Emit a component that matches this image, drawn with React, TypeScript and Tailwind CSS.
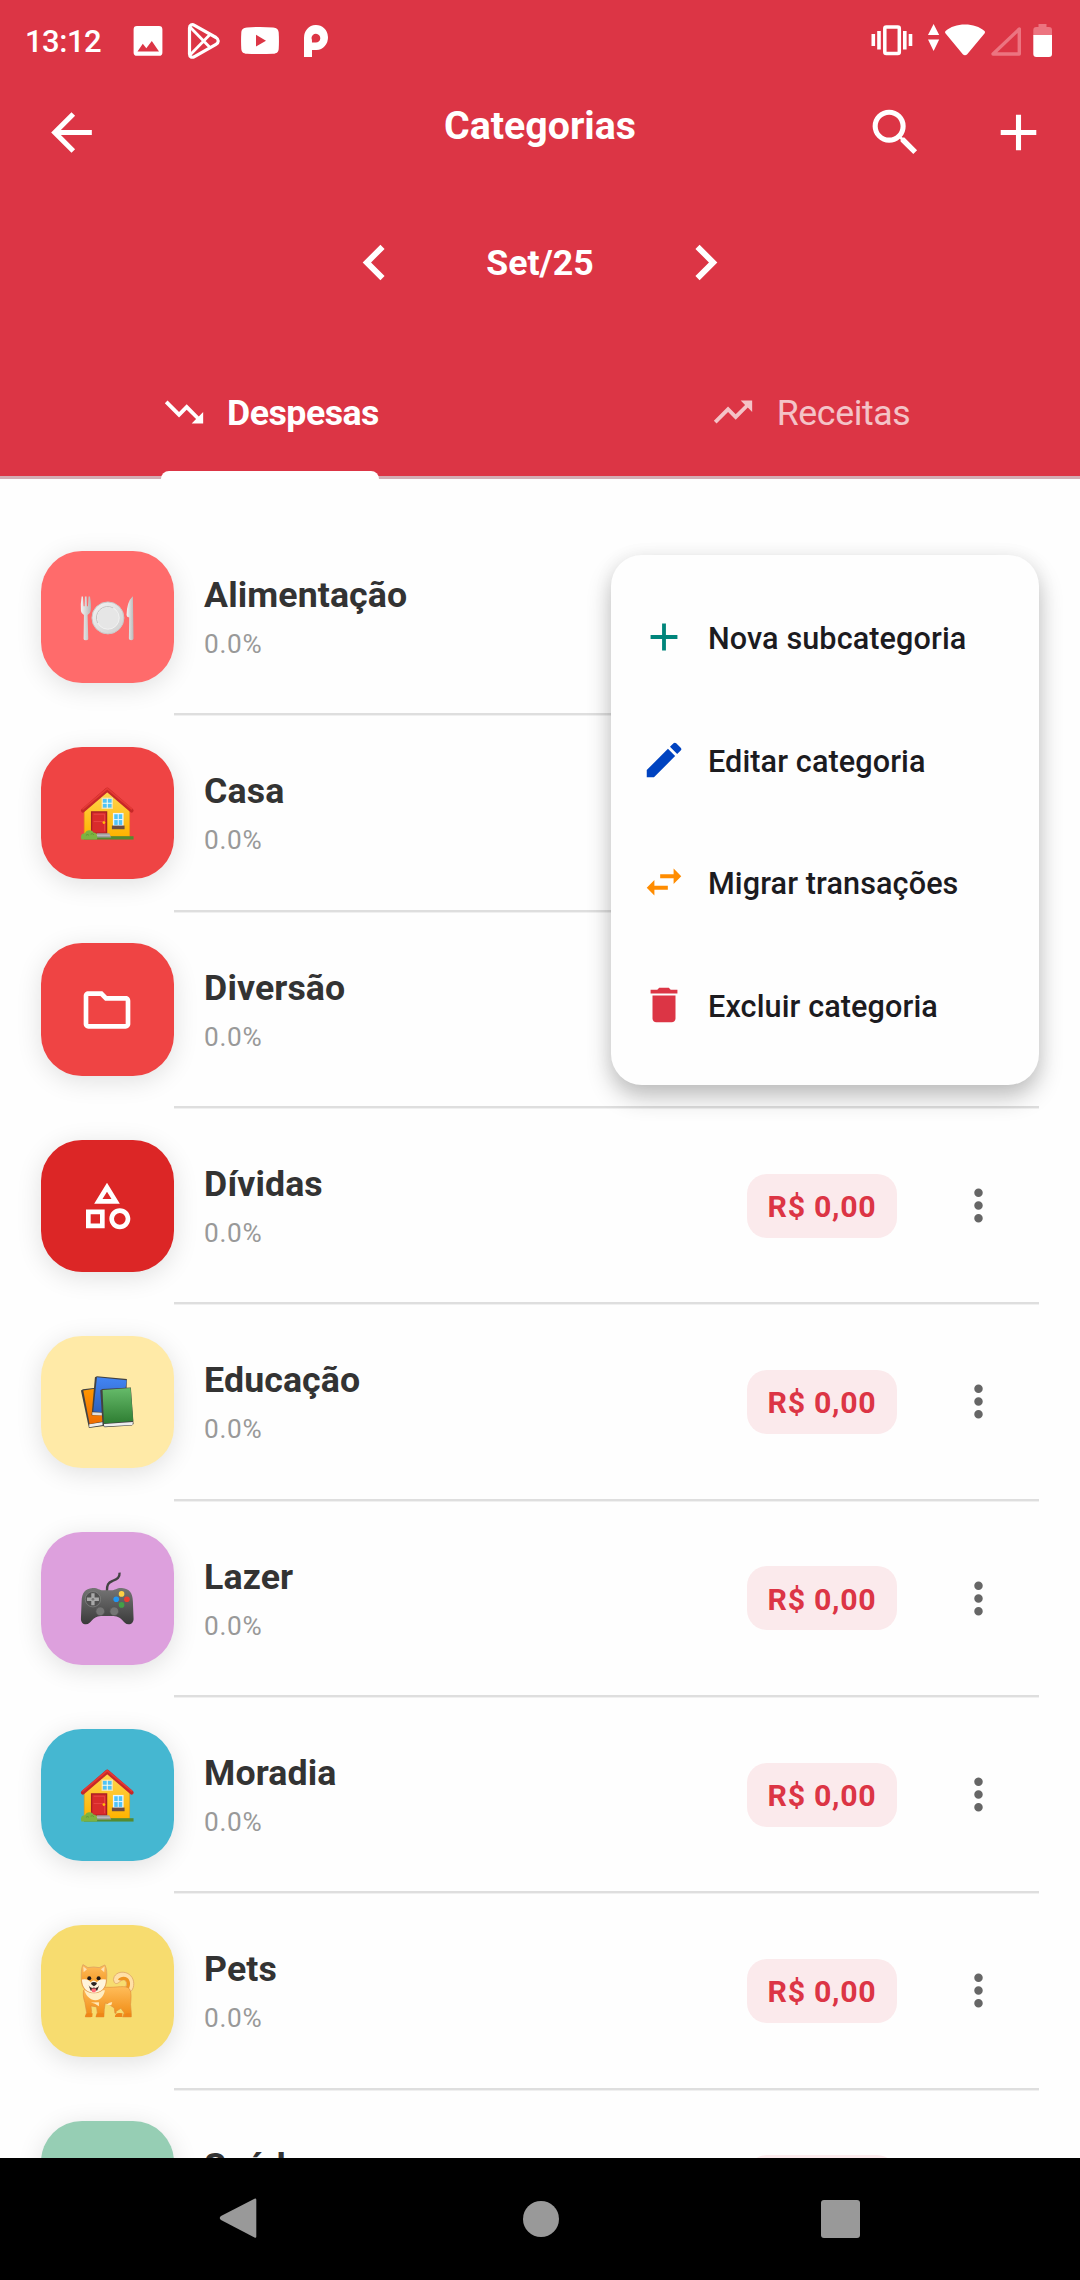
import type { ReactNode } from "react";
import {
  MdAdd,
  MdArrowBack,
  MdChevronLeft,
  MdChevronRight,
  MdDelete,
  MdEdit,
  MdMoreVert,
  MdOutlineCategory,
  MdOutlineFolder,
  MdSearch,
  MdSwapHoriz,
  MdTrendingDown,
  MdTrendingUp,
} from "react-icons/md";

function StatusBar() {
  return (
    <div className="flex h-[80px] items-center pr-[28px] pl-[25px] text-white">
      <span className="w-[108px] pt-[2px] text-[31px] leading-none font-medium tracking-[-0.5px]">13:12</span>
      <svg className="h-[80px] w-[200px]" viewBox="133 0 200 80" fill="#fff">
        <path
          fillRule="evenodd"
          d="M137 26h22a3.4 3.4 0 0 1 3.400 3.400v23a3.400 3.400 0 0 1-3.400 3.400h-22a3.400 3.400 0 0 1-3.400-3.400v-23a3.400 3.400 0 0 1 3.400-3.400zM137.500 51.500h21.500l-7.200-10.500-5.500 7.200-3.500-4.400z"
        />
        <g fill="none" stroke="#fff" strokeWidth="3.200" strokeLinejoin="round">
          <path d="M189.500 28v26c0 3 2.500 4 5 2.600l21.500-12.300c3-1.800 3-5 0-6.800l-21.500-12.200c-2.500-1.400-5-.3-5 2.700z" />
          <path d="M190 27l20 20.500M190 55l20-20.500" strokeWidth="2.800" />
        </g>
        <path
          fillRule="evenodd"
          d="M247 27.400q13-.8 26 0c4 .3 5.400 2 5.700 5q.5 8.300 0 16.500c-.3 3-1.700 4.500-5.700 4.800q-13 .8-26 0c-4-.3-5.400-1.800-5.700-4.800q-.5-8.200 0-16.500c.3-3 1.700-4.700 5.700-5zM256 34.800v11.800l10-5.900z"
        />
        <path
          fillRule="evenodd"
          d="M304 57V38a12 12.500 0 1 1 12.500 12H312v7zM312 42.500h3.500a4.400 4.400 0 1 0-4-4.400q.8 2.500.5 4.400z"
        />
      </svg>
      <svg className="ml-auto h-[80px] w-[182px]" viewBox="870 0 182 80" fill="#fff">
        <rect x="884.800" y="27" width="14.500" height="26.500" rx="1.500" fill="none" stroke="#fff" strokeWidth="3.500" />
        <path d="M871.500 34h3.600v12h-3.600zM877.200 31h3.600v18.500h-3.600zM903 31h3.600v18.500H903zM908.700 34h3.600v12h-3.600zM933.600 24l5.600 11H928zM933.600 51l5.600-11.500H928z" />
        <path d="M965 24.500c8 0 14.500 2.200 19.500 6.600.6.600.6 1.500.2 2.200l-17.500 21c-1.200 1.400-3.200 1.400-4.400 0l-17.400-21c-.5-.7-.4-1.600.2-2.200 5-4.400 11.400-6.600 19.400-6.600z" />
        <path d="M1019.300 29v25h-26.300z" fill="none" stroke="#ec7480" strokeWidth="3.400" strokeLinejoin="round" />
        <path d="M1038.500 24h8v3h2.500q3 0 3 3v5.500h-18.700V30q0-3 3-3h2.200z" fill="#ec7480" />
        <path d="M1033.300 35h18.700v19q0 3-3 3h-12.700q-3 0-3-3z" />
      </svg>
    </div>
  );
}

function Header() {
  return (
    <header className="h-[479px] bg-[#dc3545] text-white">
      <StatusBar />
      <div className="flex h-[105px] items-center justify-between pr-[31px] pl-[41px]">
        <div className="w-[174px]">
          <MdArrowBack className="size-[61px]" />
        </div>
        <h1 className="pb-[11px] text-[39.3px] leading-none font-bold">Categorias</h1>
        <div className="flex w-[184px] justify-between">
          <MdSearch className="size-[61px]" />
          <MdAdd className="size-[61px]" />
        </div>
      </div>
      <div className="flex h-[154px] items-center justify-center">
        <MdChevronLeft className="size-[71px]" />
        <span className="w-[260px] pt-[3px] text-center text-[35.7px] leading-none font-bold">Set/25</span>
        <MdChevronRight className="size-[71px]" />
      </div>
      <div className="flex h-[140px] border-b-[3px] border-[#d3adb4]">
        <div className="relative flex flex-1 items-center justify-center pt-[9px]">
          <MdTrendingDown className="mr-[20px] size-[46px]" />
          <span className="pt-[3px] text-[35.7px] leading-none font-bold tracking-[-0.5px]">Despesas</span>
          <div className="absolute bottom-[-3px] left-[161px] h-[8px] w-[218px] rounded-t-[8px] bg-white" />
        </div>
        <div className="flex flex-1 items-center justify-center pt-[9px] opacity-70">
          <MdTrendingUp className="mr-[21px] size-[46px]" />
          <span className="pt-[3px] text-[35.7px] leading-none tracking-[-0.4px]">Receitas</span>
        </div>
      </div>
    </header>
  );
}

function Plate() {
  return (
    <svg className="size-full" viewBox="63 61 398 398">
      <defs>
        <linearGradient id="silver" x1="0" x2="1">
          <stop offset="0" stopColor="#f4f4f4" />
          <stop offset="1" stopColor="#b9b9b9" />
        </linearGradient>
        <linearGradient id="rim" x1="0" x2="1" y2="1">
          <stop offset="0" stopColor="#f4f4f4" />
          <stop offset="1" stopColor="#cfcfcf" />
        </linearGradient>
      </defs>
      <g fill="url(#silver)">
        <path d="M185 198h4l2 29h3l1-29h5l1 29h3l2-29h4q5 26 2 43-2 9-9 12l2 72q-1 4-7 4-7 0-7-4l1-72q-8-4-9-12-2-18 2-43z" />
        <path d="M338 198q-17 16-18 55 0 6 8 8l-1 63q0 5 7 5t7-5l-2-126z" />
      </g>
      <circle cx="264" cy="262" r="48" fill="url(#rim)" stroke="#c9c9c9" strokeWidth="3" />
      <circle cx="264" cy="262" r="34" fill="#e6e6e6" stroke="#f8f8f8" strokeWidth="2" />
      <path d="M233 277a34 34 0 0 1 47-45" fill="none" stroke="#c4c4c4" strokeWidth="3" />
    </svg>
  );
}

function House() {
  return (
    <svg className="size-full" viewBox="63 649 398 398">
      <defs>
        <linearGradient id="wall" x1="0" x2="0" y1="0" y2="1">
          <stop offset="0" stopColor="#ffd64f" />
          <stop offset="1" stopColor="#ffb300" />
        </linearGradient>
      </defs>
      <path d="M193 836l69-56 67 56v82H193z" fill="url(#wall)" stroke="#e89b14" strokeWidth="2" />
      <path d="M189 840l73-63 73 63" fill="none" stroke="#c62828" strokeWidth="12" strokeLinecap="round" strokeLinejoin="round" />
      <path d="M189 835l73-61 73 61" fill="none" stroke="#e53935" strokeWidth="5" strokeLinecap="round" />
      <rect x="247" y="803" width="30" height="30" fill="#4fc3f7" stroke="#f3e3b0" strokeWidth="4" />
      <path d="M262 803v30M247 818h30" stroke="#fffde7" strokeWidth="3" />
      <rect x="215" y="844" width="45" height="64" fill="#d92b2b" stroke="#a61f24" strokeWidth="4" />
      <path d="M221 873h33M221 851h33v51" fill="none" stroke="#f05050" strokeWidth="2" />
      <circle cx="252" cy="876" r="4" fill="#ffc107" />
      <rect x="281" y="849" width="28" height="36" fill="#4fc3f7" stroke="#e7f6ff" strokeWidth="4" />
      <path d="M295 849v36M281 867h28" stroke="#e7f6ff" strokeWidth="3" />
      <rect x="276" y="885" width="38" height="11" fill="#6d4c41" />
      <rect x="192" y="917" width="149" height="10" fill="#558b2f" />
      <path d="M230 908h38l6 13h-44z" fill="#9e9e9e" />
      <path d="M230 914h40" stroke="#c4c4c4" strokeWidth="3" />
      <path d="M184 927q-4-20 11-19 4-9 13-9 10 0 12 7 8-1 10 6 4 6 1 15z" fill="#7cb342" />
      <path d="M198 914q5-4 9 0M212 911q6-4 10 2" fill="none" stroke="#558b2f" strokeWidth="2" />
    </svg>
  );
}

function Books() {
  return (
    <svg className="size-full" viewBox="63 76 398 398">
      <defs>
        <linearGradient id="orange" x1="0" x2="0" y1="0" y2="1">
          <stop offset="0" stopColor="#ff9800" />
          <stop offset="1" stopColor="#ef6c00" />
        </linearGradient>
        <linearGradient id="blue" x1="0" x2="0" y1="0" y2="1">
          <stop offset="0" stopColor="#4285f4" />
          <stop offset="1" stopColor="#2f5fb8" />
        </linearGradient>
        <linearGradient id="green" x1="0" x2="0" y1="0" y2="1">
          <stop offset="0" stopColor="#66bb6a" />
          <stop offset="1" stopColor="#2e7d32" />
        </linearGradient>
      </defs>
      <path d="M183 240l6-4 45-5 20 107-3 8-44 6z" fill="#424242" />
      <path d="M208 341l43-7-1 9-42 7z" fill="#eee" />
      <path d="M190 240l50-8 13 100-44 8z" fill="url(#orange)" />
      <path d="M225 200l6-3 90 8-4 110-102-1z" fill="#424242" />
      <path d="M217 305l90 4v8l-90-4z" fill="#e0e0e0" />
      <path d="M231 200l89 9-12 101-88-7z" fill="url(#blue)" />
      <path d="M241 239l6-4 86-4 8 109-5 5-82 5-6-6z" fill="#424242" />
      <path d="M252 340l87-6-1 9-85 5z" fill="#eee" />
      <path d="M248 238l84-6 8 99-88 8z" fill="url(#green)" />
    </svg>
  );
}

function Gamepad() {
  return (
    <svg className="size-full" viewBox="63 664 398 398">
      <defs>
        <linearGradient id="pad" x1="0" x2="0" y1="0" y2="1">
          <stop offset="0" stopColor="#757575" />
          <stop offset=".55" stopColor="#555" />
          <stop offset="1" stopColor="#3a3a3a" />
        </linearGradient>
      </defs>
      <path d="M261 842c0-20 3-25 17-31s22-9 21-25" fill="none" stroke="#424242" strokeWidth="7" />
      <path
        d="M218 832c15-1 20 7 32 7h24c12 0 17-8 32-7 23 2 32 14 33 40l2 50c1 12-6 19-15 19-17 0-17-24-45-25h-38c-28 1-28 25-45 25-9 0-16-7-15-19l2-50c1-26 10-38 33-40z"
        fill="url(#pad)"
      />
      <circle cx="219" cy="866" r="23" fill="#505050" stroke="#8a8a8a" strokeWidth="2" />
      <path d="M219 848v36M201 866h36" stroke="#a9a9a9" strokeWidth="10" />
      <circle cx="219" cy="866" r="4" fill="#777" />
      <circle cx="241" cy="902" r="13" fill="#757575" stroke="#555" strokeWidth="2" />
      <circle cx="283" cy="902" r="13" fill="#757575" stroke="#555" strokeWidth="2" />
      <circle cx="305" cy="850" r="8.500" fill="#fdd044" />
      <circle cx="289" cy="866" r="8.500" fill="#2196f3" />
      <circle cx="321" cy="866" r="8.500" fill="#ea3c30" />
      <circle cx="305" cy="883" r="8.500" fill="#43a047" />
    </svg>
  );
}

function Dog() {
  return (
    <svg className="size-full" viewBox="63 674 398 398">
      <defs>
        <linearGradient id="fur" x1="0" x2="0" y1="0" y2="1">
          <stop offset="0" stopColor="#ffbd5a" />
          <stop offset="1" stopColor="#f08a12" />
        </linearGradient>
      </defs>
      <path
        d="M283 846q-5-8 0-17c8-14 26-16 39-10 17 8 23 26 18 43-3 9-9 16-17 17l-9-14c7-9 8-20 1-25-8-5-13 4-22 9-5 2-8 0-10-3z"
        fill="#ffe0a6"
        stroke="#d79a62"
        strokeWidth="2"
      />
      <path d="M294 838c10-13 30-10 35 4 4 11-1 24-7 30l-7-6c7-9 8-20 1-25-7-5-13 4-22-3z" fill="#ef9420" />
      <path
        d="M191 870c14-8 45-12 68-9 30 2 60-8 70 5 7 10 4 32 3 47l2 22v15h-26l5-12-10-14-15 10 1 5-4 0-2-16-18-12-9-3-3 20-1 22h-24l4-13-2-17-17-3 2 17-2 16h-17l4-13-5-30c-5-14-6-27-4-37z"
        fill="url(#fur)"
        stroke="#df8f3c"
        strokeWidth="2"
      />
      <path d="M285 950q0-11 13-12l10 1-2 11zM314 950q1-10 9-11l11 1v10zM228 950q1-10 11-11h13v11zM196 950q0-9 9-11h13l-1 11z" fill="#ee8619" />
      <path d="M193 870h62c-3 16-13 30-28 30-17 0-28-13-34-30z" fill="#ffedc2" />
      <path d="M213 907q12 2 24 11v-12zM260 914q8-10 17-8l-3 9z" fill="#ffe9b8" />
      <path d="M189 793l15 9q17-4 34 0l17-8q8 15 5 45c0 23-15 39-38 39s-37-15-38-38c0-18-1-36 5-47z" fill="url(#fur)" stroke="#d79a62" strokeWidth="2" />
      <path d="M190 799l11 8-10 9zM254 799l-11 8 10 9z" fill="#ffe0b2" />
      <path d="M186 838q18-4 26 8 9-10 19 0 8-12 27-8c1 24-15 40-36 40s-36-16-36-40z" fill="#fff4dc" />
      <circle cx="208" cy="834" r="6" fill="#241b16" />
      <circle cx="236" cy="834" r="6" fill="#241b16" />
      <path d="M206 855q5 11 16 7 11 4 16-7l-6 16h-20z" fill="#3a2824" />
      <path d="M215 865h13v5q0 7-6 7-7 0-7-7z" fill="#ff6d78" />
      <path d="M213 848q9-5 18 0 0 6-9 10-9-4-9-10z" fill="#2b2422" />
    </svg>
  );
}

type Category = { name: string; tile: string; icon: ReactNode; amount?: string };

// Rows behind the open action menu carry no amount.
const categories: Category[] = [
  { name: "Alimentação", tile: "bg-[#ff6b6b]", icon: <Plate /> },
  { name: "Casa", tile: "bg-[#ef4444]", icon: <House /> },
  { name: "Diversão", tile: "bg-[#ef4444]", icon: <MdOutlineFolder className="size-[56px] text-white" /> },
  { name: "Dívidas", tile: "bg-[#dc2626]", icon: <MdOutlineCategory className="size-[56px] text-white" />, amount: "R$ 0,00" },
  { name: "Educação", tile: "bg-[#ffeaa7]", icon: <Books />, amount: "R$ 0,00" },
  { name: "Lazer", tile: "bg-[#dda0dd]", icon: <Gamepad />, amount: "R$ 0,00" },
  { name: "Moradia", tile: "bg-[#45b7d1]", icon: <House />, amount: "R$ 0,00" },
  { name: "Pets", tile: "bg-[#f7dc6f]", icon: <Dog />, amount: "R$ 0,00" },
  { name: "Saúde", tile: "bg-[#96ceb4]", icon: null, amount: "R$ 0,00" },
];

function CategoryRow({ name, tile, icon, amount }: Category) {
  return (
    <li className="flex h-[196.33px] shrink-0 px-[41px]">
      <div
        className={`mt-[30.6px] flex size-[132.5px] shrink-0 items-center justify-center rounded-[41px] shadow-[0_5px_26px_rgba(0,0,0,0.12)] ${tile}`}
      >
        {icon}
      </div>
      <div className="flex flex-1 flex-col">
        <div className="flex flex-1 items-center pr-[35px] pl-[30.6px]">
          <div className="flex-1 pt-[5px]">
            <div className="text-[35.7px] leading-[50px] font-bold tracking-[0.1px] text-[#333]">{name}</div>
            <div className="text-[26.2px] leading-[48px] tracking-[0.7px] text-[#999]">0.0%</div>
          </div>
          {amount && (
            <>
              <div className="mr-[56px] flex h-[64px] w-[150px] items-center justify-center rounded-[20px] bg-[#fbeaec] pt-[3px] text-[30.3px] leading-none font-bold tracking-[0.7px] text-[#dc3545]">
                {amount}
              </div>
              <MdMoreVert className="size-[51px] text-[#666]" />
            </>
          )}
        </div>
        <div className="h-[3px] border-b border-[#f0f0f0] bg-[#dedede]" />
      </div>
    </li>
  );
}

const actions = [
  { label: "Nova subcategoria", icon: <MdAdd className="size-[46px] text-[#00857b]" /> },
  { label: "Editar categoria", icon: <MdEdit className="size-[46px] text-[#0043c0]" /> },
  { label: "Migrar transações", icon: <MdSwapHoriz className="size-[46px] text-[#ff8c00]" /> },
  { label: "Excluir categoria", icon: <MdDelete className="size-[46px] text-[#dc3545]" /> },
];

function ActionMenu() {
  return (
    <div className="absolute top-[555px] left-[611px] h-[530px] w-[428px] rounded-[31px] bg-[#fefefe] py-[21px] shadow-[0_12px_24px_rgba(0,0,0,0.24),0_2px_20px_rgba(0,0,0,0.06)]">
      {actions.map((a) => (
        <div key={a.label} className="flex h-[122.5px] items-center gap-[21px] pl-[30px]">
          {a.icon}
          <span className="pt-[5px] text-[30.6px] leading-none font-medium tracking-[0.1px] whitespace-nowrap text-[#1c1b1f]">
            {a.label}
          </span>
        </div>
      ))}
    </div>
  );
}

function NavBar() {
  return (
    <nav className="flex h-[122px] items-center justify-between bg-black px-[215px]">
      <svg className="size-[46px]" viewBox="0 0 46 46" fill="#999">
        <path d="M39.500 2.800q1.800-.8 1.800 1v36.600q0 1.800-1.800 1L6 24q-2.500-2 0-4z" />
      </svg>
      <div className="mr-[1px] size-[36px] rounded-full bg-[#999]" />
      <div className="mr-[5.500px] size-[38.500px] rounded-[3px] bg-[#999]" />
    </nav>
  );
}

export default function App() {
  return (
    <div className="relative flex h-[2280px] w-[1080px] flex-col overflow-hidden bg-[#fefefe] font-['Roboto',sans-serif]">
      <Header />
      <ul className="flex min-h-0 flex-1 flex-col overflow-hidden pt-[41px]">
        {categories.map((c) => (
          <CategoryRow key={c.name} {...c} />
        ))}
      </ul>
      <NavBar />
      <ActionMenu />
    </div>
  );
}
